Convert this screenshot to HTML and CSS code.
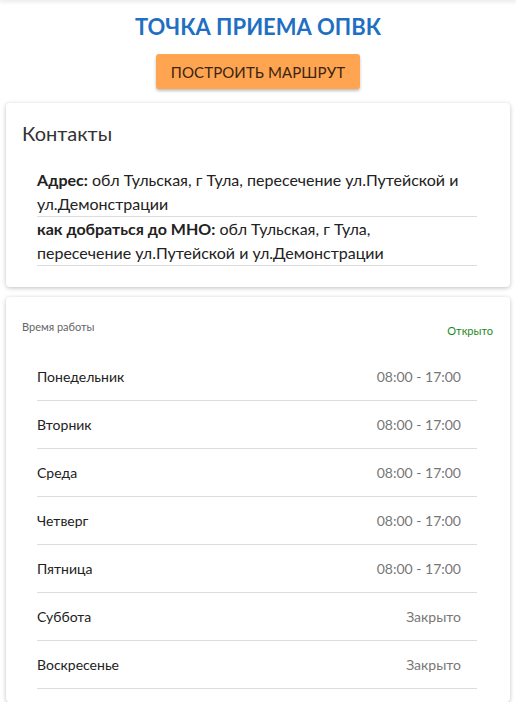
FILE: index.html
```html
<!DOCTYPE html>
<html lang="ru">
<head>
    <meta charset="UTF-8">
    <meta name="viewport" content="width=device-width, initial-scale=1.0">
    <title>Точка приема ОПВК</title>
    <link rel="stylesheet" href="styles.css">
</head>
<body>
    <div class="topbar"></div>
    <div class="page">
        <h1 class="title">ТОЧКА ПРИЕМА ОПВК</h1>
        <div class="actions">
            <button class="route-btn">Построить маршрут</button>
        </div>

        <div class="card">
            <h2 class="card-title">Контакты</h2>
            <ul class="info-list">
                <li><b>Адрес:</b> обл Тульская, г Тула, пересечение ул.Путейской и ул.Демонстрации</li>
                <li><b>как добраться до МНО:</b> обл Тульская, г Тула, пересечение ул.Путейской и ул.Демонстрации</li>
            </ul>
        </div>

        <div class="card schedule">
            <div class="schedule-head">
                <span class="schedule-label">Время работы</span>
                <span class="status open">Открыто</span>
            </div>
            <ul class="days">
                <li><span class="day">Понедельник</span><span class="hours">08:00 - 17:00</span></li>
                <li><span class="day">Вторник</span><span class="hours">08:00 - 17:00</span></li>
                <li><span class="day">Среда</span><span class="hours">08:00 - 17:00</span></li>
                <li><span class="day">Четверг</span><span class="hours">08:00 - 17:00</span></li>
                <li><span class="day">Пятница</span><span class="hours">08:00 - 17:00</span></li>
                <li><span class="day">Суббота</span><span class="hours">Закрыто</span></li>
                <li><span class="day">Воскресенье</span><span class="hours">Закрыто</span></li>
            </ul>
        </div>
    </div>
</body>
</html>
```

FILE: styles.css
```css
body {
    font-family: 'Lato', 'Noto Sans', sans-serif;
    background: #fff;
    margin: 0;
    padding: 0;
    color: #222;
}
.topbar {
    height: 0;
    box-shadow: 0 0 4px 1px rgba(0, 0, 0, 0.18);
}
.page {
    padding: 12px 6px 0;
}
.title {
    margin: 0;
    text-align: center;
    font-size: 22px;
    line-height: 30px;
    font-weight: 700;
    color: #1f6fc2;
}
.actions {
    display: flex;
    justify-content: center;
    margin-top: 12px;
}
.route-btn {
    font-family: inherit;
    font-size: 15px;
    text-transform: uppercase;
    letter-spacing: 0.1px;
    color: #3b2410;
    background-color: #ffa450;
    border: none;
    border-radius: 3px;
    height: 35px;
    padding: 0 15px;
    box-shadow: 0 2px 3px rgba(0, 0, 0, 0.25);
    cursor: pointer;
}
.card {
    background: #fff;
    border-radius: 4px;
    box-shadow: 0 1px 4px rgba(0, 0, 0, 0.25);
    margin-top: 14px;
    padding: 16px 16px 21px;
}
.card-title {
    margin: 0;
    font-size: 20px;
    line-height: 28px;
    font-weight: 400;
    color: #333;
}
.info-list {
    list-style: none;
    margin: 21px 0 0;
    padding: 0 17px 0 15px;
}
.info-list li {
    font-size: 16px;
    line-height: 24px;
    padding-right: 16px;
    border-bottom: 1px solid #ddd;
}
.info-list b {
    font-weight: 700;
}
.schedule {
    margin-top: 10px;
    padding: 22px 17px 13px 16px;
}
.schedule-head {
    display: flex;
    justify-content: space-between;
    align-items: flex-start;
}
.schedule-label {
    font-size: 11px;
    line-height: 16px;
    color: #666;
}
.status {
    font-size: 11px;
    line-height: 16px;
    margin-top: 4px;
}
.status.open {
    color: #1d8a1d;
}
.days {
    list-style: none;
    margin: 14px 0 0;
    padding: 0 16px 0 15px;
}
.days li {
    display: flex;
    justify-content: space-between;
    align-items: center;
    height: 47px;
    padding: 0 16px 0 0;
    border-bottom: 1px solid #ddd;
    font-size: 14px;
}
.day {
    color: #222;
}
.hours {
    color: #777;
}
```
